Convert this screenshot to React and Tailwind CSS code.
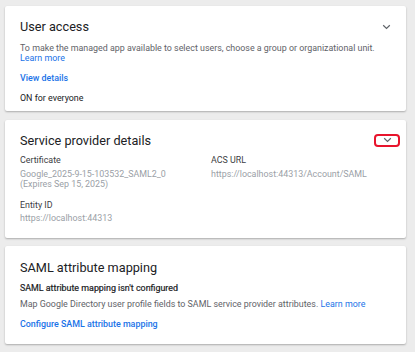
import React from "react";

function Chevron({ className = "" }) {
  return (
    <svg width="9" height="6" viewBox="0 0 9 6" className={className}>
      <polyline points="1.2,1.3 4.5,4.5 7.8,1.3" fill="none" stroke="#5f6368" strokeWidth="1.2" />
    </svg>
  );
}

export default function App() {
  return (
    <div
      className="w-[415px] h-[352px] bg-[#ececec] pl-[5px] pr-[9px] pt-[6px] flex flex-col gap-[8.5px] overflow-hidden"
      style={{ fontFamily: "Roboto, 'Liberation Sans', Arial, sans-serif" }}
    >
      {/* Card 1 */}
      <div className="bg-white rounded-[2px] shadow-[0_1px_2px_rgba(0,0,0,0.28)] px-[15px] pt-[13px] pb-[8px]">
        <div className="flex items-center justify-between">
          <div className="text-[12.7px] leading-[15px] text-[#202124]">User access</div>
          <Chevron className="mt-[1px]" />
        </div>
        <div className="mt-[9px] text-[8.9px] leading-[10px] text-[#5f6368]">
          To make the managed app available to select users, choose a group or organizational unit.
          <br />
          <span className="text-[#1a73e8]">Learn more</span>
        </div>
        <div className="mt-[10px] text-[8.9px] leading-[10px] font-medium text-[#1a73e8]">View details</div>
        <div className="mt-[10px] text-[8.9px] leading-[10px] text-[#202124]">ON for everyone</div>
      </div>

      {/* Card 2 */}
      <div className="bg-white rounded-[2px] shadow-[0_1px_2px_rgba(0,0,0,0.28)] px-[15px] pt-[13px] pb-[15px]">
        <div className="flex items-center justify-between">
          <div className="text-[12.7px] leading-[15px] text-[#202124]">Service provider details</div>
          <div className="mr-[-9px] w-[26px] h-[13px] rounded-[4px] border-2 border-[#e8142c] flex items-center justify-center">
            <Chevron />
          </div>
        </div>
        <div className="mt-[7.5px] grid grid-cols-[191px_1fr] text-[8.9px] leading-[10px]">
          <div>
            <div className="text-[#3c4043]">Certificate</div>
            <div className="mt-[4px] text-[#9aa0a6]">
              Google_2025-9-15-103532_SAML2_0
              <br />
              (Expires Sep 15, 2025)
            </div>
          </div>
          <div>
            <div className="text-[#3c4043]">ACS URL</div>
            <div className="mt-[4px] text-[#9aa0a6]">https://localhost:44313/Account/SAML</div>
          </div>
          <div className="mt-[10.5px]">
            <div className="text-[#3c4043]">Entity ID</div>
            <div className="mt-[3px] text-[#9aa0a6]">https://localhost:44313</div>
          </div>
        </div>
      </div>

      {/* Card 3 */}
      <div className="bg-white rounded-[2px] shadow-[0_1px_2px_rgba(0,0,0,0.28)] px-[15px] pt-[14px] pb-[15px]">
        <div className="text-[12.7px] leading-[15px] text-[#202124]">SAML attribute mapping</div>
        <div className="mt-[8px] text-[8.9px] leading-[10px] text-[#202124] [-webkit-text-stroke:0.2px_#202124]">
          SAML attribute mapping isn't configured
        </div>
        <div className="mt-[5.5px] text-[8.9px] leading-[10px] text-[#5f6368]">
          Map Google Directory user profile fields to SAML service provider attributes.{" "}
          <span className="text-[#1a73e8]">Learn more</span>
        </div>
        <div className="mt-[10px] text-[8.9px] leading-[10px] font-medium text-[#1a73e8]">
          Configure SAML attribute mapping
        </div>
      </div>
    </div>
  );
}
